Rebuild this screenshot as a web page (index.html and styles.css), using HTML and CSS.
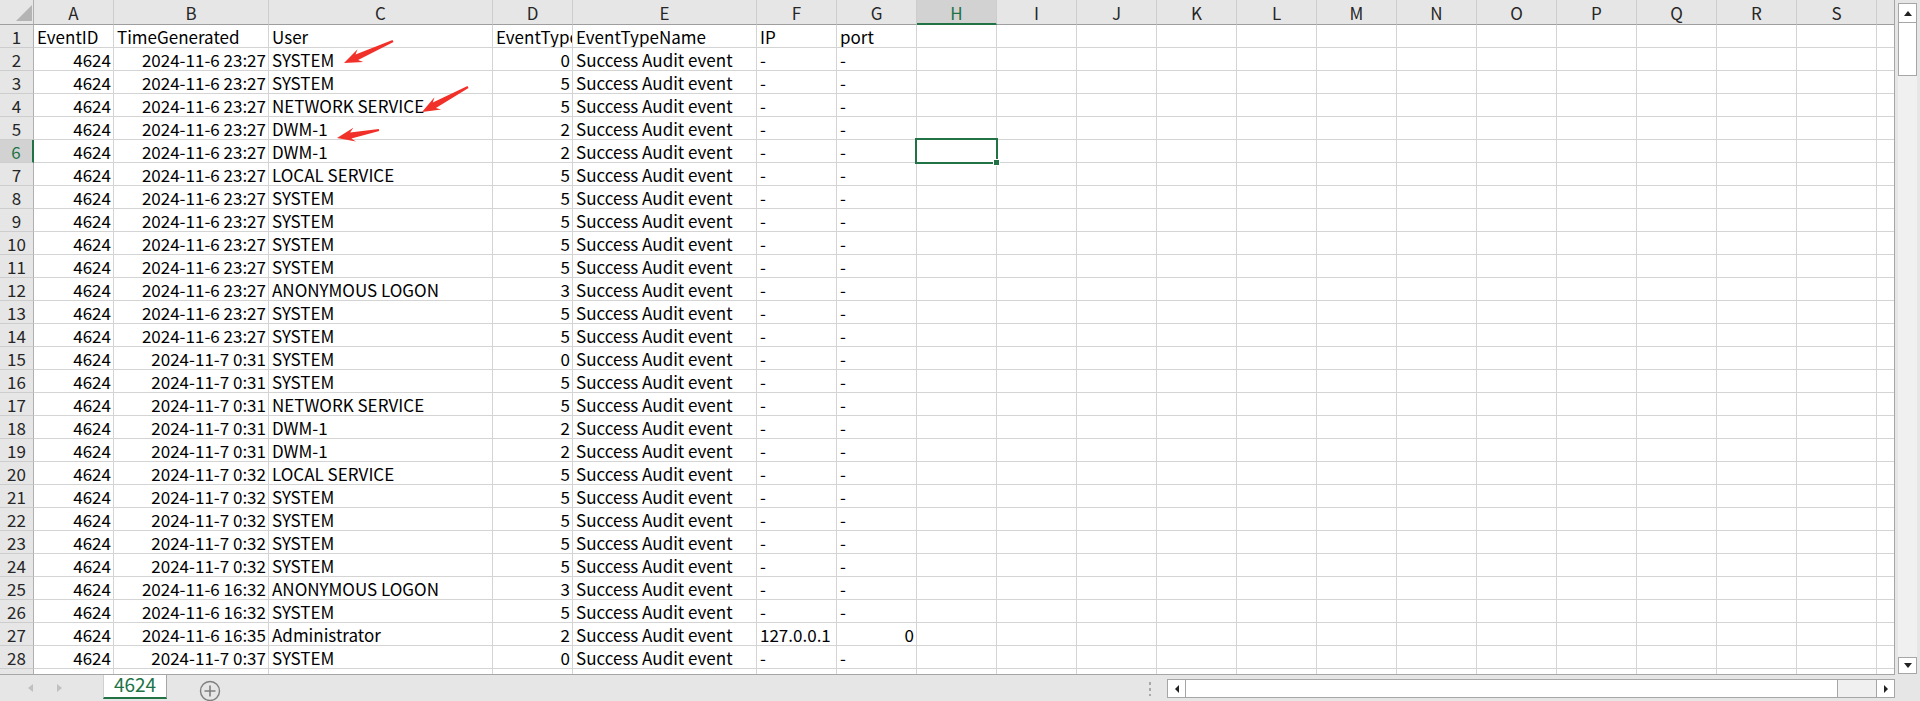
FILE: index.html
```html
<!DOCTYPE html>
<html>
<head>
<meta charset="utf-8">
<link rel="stylesheet" href="styles.css">
</head>
<body>
<div class="main">
  <div class="sheet">
    <div class="row hdr"><span class="corner"><i class="tri"></i></span><span>A</span><span>B</span><span>C</span><span>D</span><span>E</span><span>F</span><span>G</span><span class="selc">H</span><span>I</span><span>J</span><span>K</span><span>L</span><span>M</span><span>N</span><span>O</span><span>P</span><span>Q</span><span>R</span><span>S</span><span></span></div>
    <div class="row"><span class="rh">1</span><span>EventID</span><span>TimeGenerated</span><span>User</span><span>EventType</span><span>EventTypeName</span><span>IP</span><span>port</span><span></span><span></span><span></span><span></span><span></span><span></span><span></span><span></span><span></span><span></span><span></span><span></span><span></span></div>
    <div class="row"><span class="rh">2</span><span class="n">4624</span><span class="n">2024-11-6 23:27</span><span>SYSTEM</span><span class="n">0</span><span>Success Audit event</span><span>-</span><span>-</span><span></span><span></span><span></span><span></span><span></span><span></span><span></span><span></span><span></span><span></span><span></span><span></span><span></span></div>
    <div class="row"><span class="rh">3</span><span class="n">4624</span><span class="n">2024-11-6 23:27</span><span>SYSTEM</span><span class="n">5</span><span>Success Audit event</span><span>-</span><span>-</span><span></span><span></span><span></span><span></span><span></span><span></span><span></span><span></span><span></span><span></span><span></span><span></span><span></span></div>
    <div class="row"><span class="rh">4</span><span class="n">4624</span><span class="n">2024-11-6 23:27</span><span>NETWORK SERVICE</span><span class="n">5</span><span>Success Audit event</span><span>-</span><span>-</span><span></span><span></span><span></span><span></span><span></span><span></span><span></span><span></span><span></span><span></span><span></span><span></span><span></span></div>
    <div class="row"><span class="rh">5</span><span class="n">4624</span><span class="n">2024-11-6 23:27</span><span>DWM-1</span><span class="n">2</span><span>Success Audit event</span><span>-</span><span>-</span><span></span><span></span><span></span><span></span><span></span><span></span><span></span><span></span><span></span><span></span><span></span><span></span><span></span></div>
    <div class="row"><span class="rh selr">6</span><span class="n">4624</span><span class="n">2024-11-6 23:27</span><span>DWM-1</span><span class="n">2</span><span>Success Audit event</span><span>-</span><span>-</span><span class="sel"></span><span></span><span></span><span></span><span></span><span></span><span></span><span></span><span></span><span></span><span></span><span></span><span></span></div>
    <div class="row"><span class="rh">7</span><span class="n">4624</span><span class="n">2024-11-6 23:27</span><span>LOCAL SERVICE</span><span class="n">5</span><span>Success Audit event</span><span>-</span><span>-</span><span></span><span></span><span></span><span></span><span></span><span></span><span></span><span></span><span></span><span></span><span></span><span></span><span></span></div>
    <div class="row"><span class="rh">8</span><span class="n">4624</span><span class="n">2024-11-6 23:27</span><span>SYSTEM</span><span class="n">5</span><span>Success Audit event</span><span>-</span><span>-</span><span></span><span></span><span></span><span></span><span></span><span></span><span></span><span></span><span></span><span></span><span></span><span></span><span></span></div>
    <div class="row"><span class="rh">9</span><span class="n">4624</span><span class="n">2024-11-6 23:27</span><span>SYSTEM</span><span class="n">5</span><span>Success Audit event</span><span>-</span><span>-</span><span></span><span></span><span></span><span></span><span></span><span></span><span></span><span></span><span></span><span></span><span></span><span></span><span></span></div>
    <div class="row"><span class="rh">10</span><span class="n">4624</span><span class="n">2024-11-6 23:27</span><span>SYSTEM</span><span class="n">5</span><span>Success Audit event</span><span>-</span><span>-</span><span></span><span></span><span></span><span></span><span></span><span></span><span></span><span></span><span></span><span></span><span></span><span></span><span></span></div>
    <div class="row"><span class="rh">11</span><span class="n">4624</span><span class="n">2024-11-6 23:27</span><span>SYSTEM</span><span class="n">5</span><span>Success Audit event</span><span>-</span><span>-</span><span></span><span></span><span></span><span></span><span></span><span></span><span></span><span></span><span></span><span></span><span></span><span></span><span></span></div>
    <div class="row"><span class="rh">12</span><span class="n">4624</span><span class="n">2024-11-6 23:27</span><span>ANONYMOUS LOGON</span><span class="n">3</span><span>Success Audit event</span><span>-</span><span>-</span><span></span><span></span><span></span><span></span><span></span><span></span><span></span><span></span><span></span><span></span><span></span><span></span><span></span></div>
    <div class="row"><span class="rh">13</span><span class="n">4624</span><span class="n">2024-11-6 23:27</span><span>SYSTEM</span><span class="n">5</span><span>Success Audit event</span><span>-</span><span>-</span><span></span><span></span><span></span><span></span><span></span><span></span><span></span><span></span><span></span><span></span><span></span><span></span><span></span></div>
    <div class="row"><span class="rh">14</span><span class="n">4624</span><span class="n">2024-11-6 23:27</span><span>SYSTEM</span><span class="n">5</span><span>Success Audit event</span><span>-</span><span>-</span><span></span><span></span><span></span><span></span><span></span><span></span><span></span><span></span><span></span><span></span><span></span><span></span><span></span></div>
    <div class="row"><span class="rh">15</span><span class="n">4624</span><span class="n">2024-11-7 0:31</span><span>SYSTEM</span><span class="n">0</span><span>Success Audit event</span><span>-</span><span>-</span><span></span><span></span><span></span><span></span><span></span><span></span><span></span><span></span><span></span><span></span><span></span><span></span><span></span></div>
    <div class="row"><span class="rh">16</span><span class="n">4624</span><span class="n">2024-11-7 0:31</span><span>SYSTEM</span><span class="n">5</span><span>Success Audit event</span><span>-</span><span>-</span><span></span><span></span><span></span><span></span><span></span><span></span><span></span><span></span><span></span><span></span><span></span><span></span><span></span></div>
    <div class="row"><span class="rh">17</span><span class="n">4624</span><span class="n">2024-11-7 0:31</span><span>NETWORK SERVICE</span><span class="n">5</span><span>Success Audit event</span><span>-</span><span>-</span><span></span><span></span><span></span><span></span><span></span><span></span><span></span><span></span><span></span><span></span><span></span><span></span><span></span></div>
    <div class="row"><span class="rh">18</span><span class="n">4624</span><span class="n">2024-11-7 0:31</span><span>DWM-1</span><span class="n">2</span><span>Success Audit event</span><span>-</span><span>-</span><span></span><span></span><span></span><span></span><span></span><span></span><span></span><span></span><span></span><span></span><span></span><span></span><span></span></div>
    <div class="row"><span class="rh">19</span><span class="n">4624</span><span class="n">2024-11-7 0:31</span><span>DWM-1</span><span class="n">2</span><span>Success Audit event</span><span>-</span><span>-</span><span></span><span></span><span></span><span></span><span></span><span></span><span></span><span></span><span></span><span></span><span></span><span></span><span></span></div>
    <div class="row"><span class="rh">20</span><span class="n">4624</span><span class="n">2024-11-7 0:32</span><span>LOCAL SERVICE</span><span class="n">5</span><span>Success Audit event</span><span>-</span><span>-</span><span></span><span></span><span></span><span></span><span></span><span></span><span></span><span></span><span></span><span></span><span></span><span></span><span></span></div>
    <div class="row"><span class="rh">21</span><span class="n">4624</span><span class="n">2024-11-7 0:32</span><span>SYSTEM</span><span class="n">5</span><span>Success Audit event</span><span>-</span><span>-</span><span></span><span></span><span></span><span></span><span></span><span></span><span></span><span></span><span></span><span></span><span></span><span></span><span></span></div>
    <div class="row"><span class="rh">22</span><span class="n">4624</span><span class="n">2024-11-7 0:32</span><span>SYSTEM</span><span class="n">5</span><span>Success Audit event</span><span>-</span><span>-</span><span></span><span></span><span></span><span></span><span></span><span></span><span></span><span></span><span></span><span></span><span></span><span></span><span></span></div>
    <div class="row"><span class="rh">23</span><span class="n">4624</span><span class="n">2024-11-7 0:32</span><span>SYSTEM</span><span class="n">5</span><span>Success Audit event</span><span>-</span><span>-</span><span></span><span></span><span></span><span></span><span></span><span></span><span></span><span></span><span></span><span></span><span></span><span></span><span></span></div>
    <div class="row"><span class="rh">24</span><span class="n">4624</span><span class="n">2024-11-7 0:32</span><span>SYSTEM</span><span class="n">5</span><span>Success Audit event</span><span>-</span><span>-</span><span></span><span></span><span></span><span></span><span></span><span></span><span></span><span></span><span></span><span></span><span></span><span></span><span></span></div>
    <div class="row"><span class="rh">25</span><span class="n">4624</span><span class="n">2024-11-6 16:32</span><span>ANONYMOUS LOGON</span><span class="n">3</span><span>Success Audit event</span><span>-</span><span>-</span><span></span><span></span><span></span><span></span><span></span><span></span><span></span><span></span><span></span><span></span><span></span><span></span><span></span></div>
    <div class="row"><span class="rh">26</span><span class="n">4624</span><span class="n">2024-11-6 16:32</span><span>SYSTEM</span><span class="n">5</span><span>Success Audit event</span><span>-</span><span>-</span><span></span><span></span><span></span><span></span><span></span><span></span><span></span><span></span><span></span><span></span><span></span><span></span><span></span></div>
    <div class="row"><span class="rh">27</span><span class="n">4624</span><span class="n">2024-11-6 16:35</span><span>Administrator</span><span class="n">2</span><span>Success Audit event</span><span>127.0.0.1</span><span class="n">0</span><span></span><span></span><span></span><span></span><span></span><span></span><span></span><span></span><span></span><span></span><span></span><span></span><span></span></div>
    <div class="row"><span class="rh">28</span><span class="n">4624</span><span class="n">2024-11-7 0:37</span><span>SYSTEM</span><span class="n">0</span><span>Success Audit event</span><span>-</span><span>-</span><span></span><span></span><span></span><span></span><span></span><span></span><span></span><span></span><span></span><span></span><span></span><span></span><span></span></div>
    <div class="row"><span class="rh"></span><span></span><span></span><span></span><span></span><span></span><span></span><span></span><span></span><span></span><span></span><span></span><span></span><span></span><span></span><span></span><span></span><span></span><span></span><span></span><span></span></div>
  </div>
  <div class="vbar">
    <div class="vtrack">
      <div class="vbtn"><i class="up"></i></div>
      <div class="vthumb"></div>
      <div class="vfill"></div>
      <div class="vbtn down-btn"><i class="down"></i></div>
    </div>
  </div>
</div>
<div class="tabbar">
  <div class="nav"><i class="nl"></i><i class="nr"></i></div>
  <div class="tab">4624</div>
  <svg class="plus" width="22" height="22" viewBox="0 0 22 22"><circle cx="11" cy="11" r="9.5" fill="none" stroke="#7f7f7f" stroke-width="1.4"/><path d="M11 5.5v11M5.5 11h11" stroke="#7f7f7f" stroke-width="1.6"/></svg>
  <div class="spacer"></div>
  <div class="split"></div>
  <div class="hbar">
    <div class="hbtn"><i class="left"></i></div>
    <div class="hthumb"></div>
    <div class="hfill"></div>
    <div class="hbtn rbtn"><i class="right"></i></div>
  </div>
  <div class="rpad"></div>
</div>
<svg class="arrows" width="1920" height="701" viewBox="0 0 1920 701">
  <polygon fill="#f2302a" points="344,63 357.55,49.24 355.5,54.6 392.5,40 393.5,42 358.1,60.0 363.29,62.0"/>
  <polygon fill="#f2302a" points="422,112 434.47,97.25 432.8,102.6 467.5,86 468.5,88 435.9,108.0 441.17,109.55"/>
  <polygon fill="#f2302a" points="337,138 353.37,127.76 350.1,132.4 378.8,129 379.2,131 351.4,138.4 355.99,141.50"/>
</svg>
</body>
</html>
```

FILE: styles.css
```css
html, body {
  margin: 0;
  padding: 0;
}
body {
  width: 1920px;
  height: 701px;
  overflow: hidden;
  position: relative;
  background: #e6e6e6;
  font-family: "Noto Sans CJK SC", "Noto Sans", sans-serif;
}
.main {
  display: flex;
  height: 675px;
}
.sheet {
  flex: none;
  width: 1895px;
  height: 675px;
  box-sizing: border-box;
  border-right: 1px solid #a6a6a6;
  border-bottom: 1px solid #a6a6a6;
  overflow: hidden;
  background: #fff;
}
.row {
  display: grid;
  grid-template-columns: 34px 80px 155px 224px 80px 184px repeat(15, 80px);
  height: 23px;
}
.row > span {
  display: block;
  box-sizing: border-box;
  border-right: 1px solid #d4d4d4;
  border-bottom: 1px solid #d4d4d4;
  font-size: 17px;
  line-height: 20px;
  padding: 2px 2px 0 3px;
  white-space: nowrap;
  overflow: hidden;
  color: #000;
}
.row > span.n {
  text-align: right;
}
.row > .rh {
  background: #e6e6e6;
  text-align: center;
  padding: 2px 0 0;
  border-right-color: #b0b0b0;
  border-bottom-color: #cdcdcd;
  color: #262626;
}
.row > .rh.selr {
  background: #d2d2d2;
  color: #217346;
  border-right: 2px solid #217346;
}
.hdr {
  height: 25px;
}
.hdr > span {
  background: #e6e6e6;
  text-align: center;
  padding: 3px 0 0;
  border-bottom-color: #9e9e9e;
  border-right-color: #cdcdcd;
  color: #262626;
}
.hdr > span.selc {
  background: #d2d2d2;
  color: #217346;
  border-bottom: 2px solid #217346;
}
.hdr > span.corner {
  display: flex;
  justify-content: flex-end;
  align-items: flex-end;
  padding: 0 1px 3px 0;
  border-right-color: #b0b0b0;
}
.tri {
  display: block;
  width: 0;
  height: 0;
  border-left: 16px solid transparent;
  border-bottom: 16px solid #b4b4b4;
}
.row > span.sel {
  position: relative;
  overflow: visible;
}
.sel::after {
  content: "";
  position: absolute;
  left: -2px;
  top: -2px;
  right: -2px;
  bottom: -2px;
  border: 2px solid #217346;
  z-index: 1;
}
.sel::before {
  content: "";
  position: absolute;
  right: -4px;
  bottom: -4px;
  width: 5px;
  height: 5px;
  background: #217346;
  border: 1px solid #fff;
  z-index: 2;
}

/* vertical scrollbar */
.vbar {
  flex: none;
  width: 25px;
  height: 675px;
  box-sizing: border-box;
  padding: 3px 3px 1px 3px;
  background: #e6e6e6;
}
.vtrack {
  height: 100%;
  display: flex;
  flex-direction: column;
  background: #f0f0f0;
}
.vbtn {
  flex: none;
  height: 20px;
  box-sizing: border-box;
  border: 1px solid #a6a6a6;
  background: #fff;
  display: flex;
  align-items: center;
  justify-content: center;
}
.vbtn.down-btn {
  height: 17px;
}
.vthumb {
  flex: none;
  height: 53px;
  box-sizing: border-box;
  border: 1px solid #a6a6a6;
  border-top: none;
  background: #fff;
}
.vfill {
  flex: 1;
}
.up {
  display: block;
  width: 0;
  height: 0;
  border-left: 4px solid transparent;
  border-right: 4px solid transparent;
  border-bottom: 5px solid #222;
}
.down {
  display: block;
  width: 0;
  height: 0;
  border-left: 4px solid transparent;
  border-right: 4px solid transparent;
  border-top: 5px solid #222;
}

/* tab bar */
.tabbar {
  display: flex;
  height: 26px;
  background: #e6e6e6;
}
.nav {
  flex: none;
  width: 103px;
  display: flex;
  align-items: center;
  padding-left: 28px;
  box-sizing: border-box;
  gap: 24px;
}
.nl {
  display: block;
  width: 0;
  height: 0;
  border-top: 4px solid transparent;
  border-bottom: 4px solid transparent;
  border-right: 5px solid #c0c0c0;
}
.nr {
  display: block;
  width: 0;
  height: 0;
  border-top: 4px solid transparent;
  border-bottom: 4px solid transparent;
  border-left: 5px solid #c0c0c0;
}
.tab {
  flex: none;
  width: 64px;
  height: 24px;
  box-sizing: border-box;
  background: #fff;
  border-left: 1px solid #d0d0d0;
  border-right: 1px solid #a6a6a6;
  border-bottom: 2px solid #217346;
  color: #217346;
  font-size: 19px;
  line-height: 16px;
  padding-top: 1px;
  text-align: center;
}
.plus {
  flex: none;
  margin: 5px 0 0 32px;
  display: block;
}
.spacer {
  flex: 1;
}
.split {
  flex: none;
  width: 2px;
  height: 14px;
  margin-top: 7px;
  margin-right: 16px;
  background: repeating-linear-gradient(to bottom, #a8a8a8 0 3px, transparent 3px 6px);
}
.hbar {
  flex: none;
  width: 728px;
  height: 19px;
  margin-top: 4px;
  box-sizing: border-box;
  border: 1px solid #a6a6a6;
  background: #f0f0f0;
  display: flex;
}
.hbtn {
  flex: none;
  width: 18px;
  box-sizing: border-box;
  background: #fff;
  border-right: 1px solid #a6a6a6;
  display: flex;
  align-items: center;
  justify-content: center;
}
.hbtn.rbtn {
  border-right: none;
  border-left: 1px solid #a6a6a6;
}
.hthumb {
  flex: none;
  width: 652px;
  box-sizing: border-box;
  border-right: 1px solid #a6a6a6;
  background: #fff;
}
.hfill {
  flex: 1;
}
.left {
  display: block;
  width: 0;
  height: 0;
  border-top: 4px solid transparent;
  border-bottom: 4px solid transparent;
  border-right: 4px solid #222;
}
.right {
  display: block;
  width: 0;
  height: 0;
  border-top: 4px solid transparent;
  border-bottom: 4px solid transparent;
  border-left: 4px solid #222;
}
.rpad {
  flex: none;
  width: 25px;
}
.arrows {
  position: absolute;
  left: 0;
  top: 0;
  pointer-events: none;
}
```
